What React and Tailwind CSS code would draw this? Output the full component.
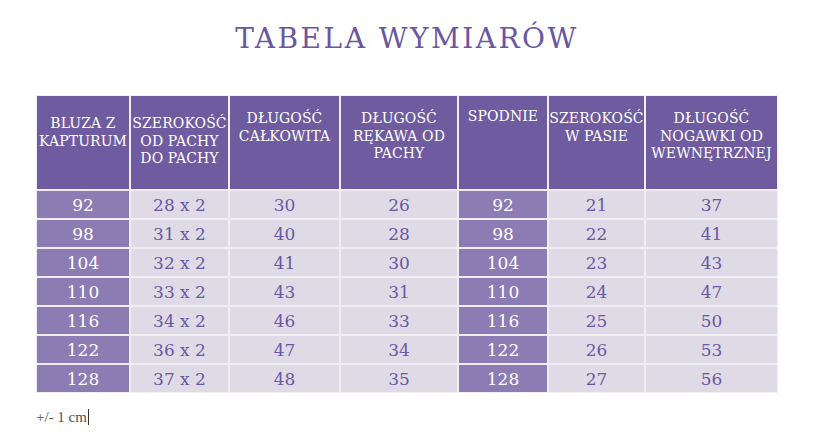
import React from "react";

const headers = [
  { lines: ["BLUZA Z", "KAPTURUM"], pt: "pt-[19px]" },
  { lines: ["SZEROKOŚĆ", "OD PACHY", "DO PACHY"], pt: "pt-[19px]" },
  { lines: ["DŁUGOŚĆ", "CAŁKOWITA"], pt: "pt-[14px]" },
  { lines: ["DŁUGOŚĆ", "RĘKAWA OD", "PACHY"], pt: "pt-[14px]" },
  { lines: ["SPODNIE"], pt: "pt-[12px]" },
  { lines: ["SZEROKOŚĆ", "W PASIE"], pt: "pt-[14px]" },
  { lines: ["DŁUGOŚĆ", "NOGAWKI OD", "WEWNĘTRZNEJ"], pt: "pt-[14px]" },
];

const rows = [
  ["92", "28 x 2", "30", "26", "92", "21", "37"],
  ["98", "31 x 2", "40", "28", "98", "22", "41"],
  ["104", "32 x 2", "41", "30", "104", "23", "43"],
  ["110", "33 x 2", "43", "31", "110", "24", "47"],
  ["116", "34 x 2", "46", "33", "116", "25", "50"],
  ["122", "36 x 2", "47", "34", "122", "26", "53"],
  ["128", "37 x 2", "48", "35", "128", "27", "56"],
];

export default function App() {
  return (
    <div className="w-[820px] h-[433px] bg-white font-['DejaVu_Serif',serif] overflow-hidden">
      <div className="w-[742px] ml-[36px]">
        <h1 className="pt-[20px] h-[95px] text-center text-[28px] leading-[38px] text-[#6a56a1] tracking-[2.5px]">
          TABELA WYMIARÓW
        </h1>

        <div className="grid grid-cols-[92px_97px_109px_116px_88px_95px_131px] grid-rows-[93px_repeat(7,27px)] gap-[2px] p-[1px] bg-[#efeef3]">
          {headers.map((h, i) => (
            <div
              key={i}
              className={`bg-[#6f5ba0] text-white text-center text-[14px] leading-[17.5px] tracking-[0.1px] ${h.pt}`}
            >
              {h.lines.map((l, j) => (
                <div key={j} className="whitespace-nowrap">
                  {l}
                </div>
              ))}
            </div>
          ))}

          {rows.map((r, ri) =>
            r.map((v, ci) => {
              const size = ci === 0 || ci === 4;
              return (
                <div
                  key={ri + "-" + ci}
                  className={
                    size
                      ? "bg-[#8b7cb3] text-white text-center text-[17px] leading-[28px]"
                      : "bg-[#dedbe7] text-[#6a58a2] text-center text-[17px] leading-[28px]"
                  }
                >
                  {v}
                </div>
              );
            })
          )}
        </div>

        <div className="mt-[13px] flex items-center text-[#555] font-['Liberation_Serif',serif]">
          <span className="text-[15px]">+/- 1 cm</span>
          <span className="ml-[1px] w-[1px] h-[16px] bg-[#333]"></span>
        </div>
      </div>
    </div>
  );
}
